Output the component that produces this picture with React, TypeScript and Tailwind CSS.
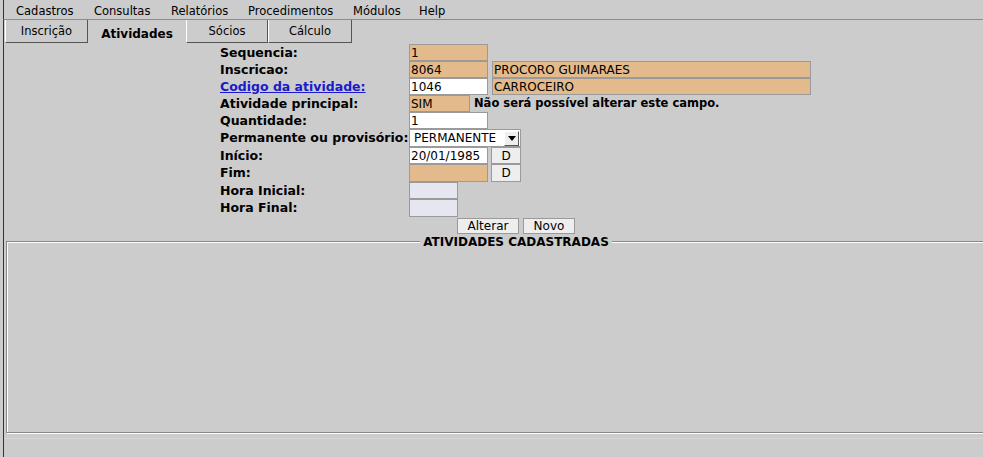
import React from "react";

const orange = "bg-[#e3ba8b]";

const Field: React.FC<{ w: string; bg: string; value?: string; className?: string }> = ({ w, bg, value, className }) => (
  <div className={`${w} ${bg} h-full border border-[#9a9a9a] flex items-center pl-[1px] text-[12px] leading-none ${className ?? ""}`}>
    {value}
  </div>
);

const Btn: React.FC<{ label: string; w: string; className?: string }> = ({ label, w, className }) => (
  <div className={`${w} h-full bg-[#eeeeee] border border-[#9a9a9a] flex items-center justify-center text-[12px] leading-none ${className ?? ""}`}>
    {label}
  </div>
);

const Row: React.FC<{ label: React.ReactNode; h?: string; children?: React.ReactNode }> = ({ label, h, children }) => (
  <div className={`flex items-stretch ${h ?? "h-[17px]"}`}>
    <div className="w-[189px] flex items-center pt-[1px] font-bold text-[12.5px] leading-none whitespace-nowrap">{label}</div>
    <div className="flex items-stretch">{children}</div>
  </div>
);

const App: React.FC = () => {
  const menus = [
    { t: "Cadastros", w: "w-[78px]" },
    { t: "Consultas", w: "w-[77px]" },
    { t: "Relatórios", w: "w-[77px]" },
    { t: "Procedimentos", w: "w-[105px]" },
    { t: "Módulos", w: "w-[66px]" },
    { t: "Help", w: "w-[50px]" },
  ];

  return (
    <div className="w-[983px] h-[457px] bg-[#cccccc] flex flex-col overflow-hidden text-black font-['DejaVu_Sans',sans-serif]">
      <div className="h-[20px] ml-[3px] border-l border-l-[#333] border-b border-b-[#8a8a8a] flex items-center pl-[12px] pt-[4px] text-[11.5px] leading-none">
        {menus.map((m) => (
          <div key={m.t} className={m.w}>{m.t}</div>
        ))}
      </div>

      <div className="flex-1 flex flex-col ml-[3px] border-l border-[#333]">
        {/* tabs */}
        <div className="h-[23px] flex pl-[1px] text-[11.5px] leading-none">
          <div className="w-[83px] border-l border-l-white border-r border-r-[#555] border-b border-b-[#555] flex items-center justify-center pt-[1px]">
            Inscrição
          </div>
          <div className="w-[98px] flex items-center justify-center font-bold text-[12px] pt-[4px]">Atividades</div>
          <div className="w-[82px] border-l border-l-white border-r border-r-[#555] border-b border-b-[#555] flex items-center justify-center pt-[1px]">
            Sócios
          </div>
          <div className="w-[84px] border-l border-l-white border-r border-r-[#555] border-b border-b-[#555] flex items-center justify-center pt-[1px]">
            Cálculo
          </div>
        </div>

        {/* form */}
        <div className="ml-[216px] mt-[1px] flex flex-col">
          <Row label="Sequencia:">
            <Field w="w-[79px]" bg={orange} value="1" />
          </Row>
          <Row label="Inscricao:">
            <Field w="w-[79px]" bg={orange} value="8064" />
            <Field w="w-[319px]" bg={orange} value="PROCORO GUIMARAES" className="ml-[4px]" />
          </Row>
          <Row label={<span className="text-[#1a1acc] underline">Codigo da atividade:</span>}>
            <Field w="w-[79px]" bg="bg-white" value="1046" />
            <Field w="w-[319px]" bg={orange} value="CARROCEIRO" className="ml-[4px]" />
          </Row>
          <Row label="Atividade principal:">
            <Field w="w-[61px]" bg={orange} value="SIM" />
            <div className="ml-[4px] flex items-center pt-[1px] font-bold text-[11.5px] leading-none whitespace-nowrap">
              Não será possível alterar este campo.
            </div>
          </Row>
          <Row label="Quantidade:">
            <Field w="w-[79px]" bg="bg-white" value="1" />
          </Row>
          <Row label="Permanente ou provisório:" h="h-[18px]">
            <div className="w-[112px] h-full bg-white border border-[#9a9a9a] flex items-center justify-between text-[12px] leading-none pl-[4px]">
              <span>PERMANENTE</span>
              <div className="w-[15px] h-[15px] bg-[#eeeeee] border-t border-l border-t-white border-l-white border-r border-b border-r-[#555] border-b-[#555] flex items-center justify-center mr-[1px]">
                <svg width="8" height="5" viewBox="0 0 8 5">
                  <path d="M0 0 L8 0 L4 5 Z" fill="#000" />
                </svg>
              </div>
            </div>
          </Row>
          <Row label="Início:">
            <Field w="w-[79px]" bg="bg-white" value="20/01/1985" />
            <Btn label="D" w="w-[30px]" className="ml-[3px]" />
          </Row>
          <Row label="Fim:" h="h-[18px]">
            <Field w="w-[79px]" bg={orange} />
            <Btn label="D" w="w-[30px]" className="ml-[3px]" />
          </Row>
          <Row label="Hora Inicial:">
            <Field w="w-[49px]" bg="bg-[#e6e6f0]" />
          </Row>
          <Row label="Hora Final:" h="h-[18px]">
            <Field w="w-[49px]" bg="bg-[#e6e6f0]" />
          </Row>
          <div className="flex h-[16px] mt-[1px] ml-[237px] gap-[4px]">
            <Btn label="Alterar" w="w-[62px]" />
            <Btn label="Novo" w="w-[52px]" />
          </div>
        </div>

        {/* panel */}
        <div className="ml-[2px] mt-[7px] w-[1020px] h-[192px] relative border border-[#888] shadow-[inset_1px_1px_0_#ffffff,1px_1px_0_#ffffff]">
          <div className="absolute -top-[6px] left-0 right-0 flex justify-center">
            <span className="bg-[#cccccc] px-[3px] font-bold text-[12px] leading-none">ATIVIDADES CADASTRADAS</span>
          </div>
        </div>

        <div className="mt-[5px] border-t border-[#d6d6d6] flex-1" />
      </div>
    </div>
  );
};

export default App;
